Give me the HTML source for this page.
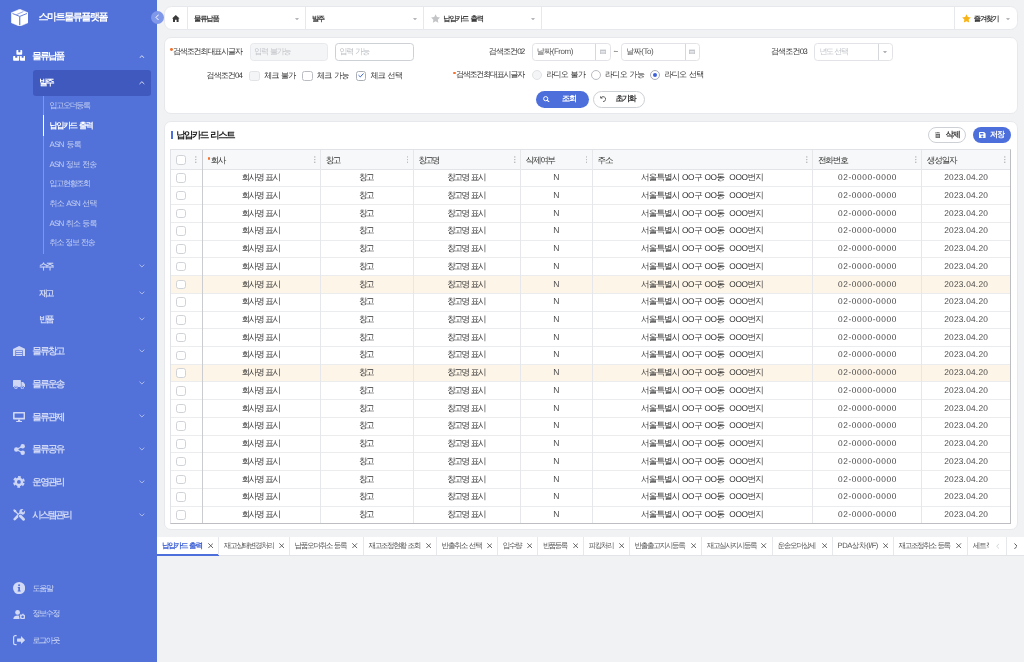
<!DOCTYPE html>
<html lang="ko"><head><meta charset="utf-8"><title>납입카드 출력</title>
<style>
*{box-sizing:border-box;margin:0;padding:0}
html,body{width:1024px;height:662px;overflow:hidden;background:#f1f2f4;font-family:"Liberation Sans",sans-serif;text-rendering:geometricPrecision}
body{position:relative}
#root{position:absolute;left:0;top:0;width:1024px;height:662px;will-change:transform}
.b{position:absolute;display:block}
.t{position:absolute;line-height:12px;white-space:nowrap}
</style></head><body>
<div id="root">
<div class="b " style="left:0px;top:0px;width:157px;height:662px;background:#5272d9"></div>
<svg class="b" style="left:10.8px;top:8.8px;width:17.5px;height:17.5px;" viewBox="0 0 17.5 17.5"><path d="M8.75 .2L17.2 3.800V13.700L8.750 17.300L.3 13.700V3.800z" fill="#fff" stroke="#fff" stroke-width=".5" stroke-linejoin="round"/><path d="M1.500 4.500L8.750 7.400L16 4.500" stroke="#5272d9" stroke-width=".9" fill="none"/><path d="M8.750 7.400V16.200" stroke="#5272d9" stroke-width="1.100" fill="none"/><path d="M5.300 5.700L12.400 2.600" stroke="#5272d9" stroke-width=".8" fill="none" opacity=".75"/></svg>
<div class="t" style="top:11.9px;font-size:10px;color:#fff;letter-spacing:-1.429px;font-weight:bold;word-spacing:1.3px;left:38.5px;">스마트물류플랫폼</div>
<svg class="b" style="left:12.8px;top:50.2px;width:12.4px;height:11px;" viewBox="0 0 12.4 11"><rect x="3.4" y=".1" width="5.8" height="4.7" rx=".7" fill="#fff"/><rect x=".1" y="5.9" width="6.1" height="4.9" rx=".7" fill="#fff"/><rect x="7" y="5.9" width="5.3" height="4.9" rx=".7" fill="#fff"/><path d="M5.300 0h2.100v2.300H5.300zM2.200 5.800h2.100v2H2.200zM8.700 5.800h1.900v2H8.700z" fill="#5272d9"/></svg>
<div class="t" style="top:50.6px;font-size:9.5px;color:#fff;letter-spacing:-1.683px;font-weight:bold;word-spacing:1.24px;left:32.32px;">물류납품</div>
<svg class="b" style="left:138.9px;top:54.65px;width:5.8px;height:3.7px;" viewBox="0 0 5.800 3.700"><path d="M.5 3L2.900.7 5.300 3" fill="none" stroke="#dfe5f9" stroke-width="0.95"/></svg>
<div class="b " style="left:33px;top:70px;width:118px;height:25.5px;background:#3f59bf;border-radius:3px"></div>
<div class="t" style="top:76.4px;font-size:8.6px;color:#fff;letter-spacing:-1.928px;font-weight:bold;word-spacing:1.12px;left:39.37px;">발주</div>
<svg class="b" style="left:138.9px;top:80.95px;width:5.8px;height:3.7px;" viewBox="0 0 5.800 3.700"><path d="M.5 3L2.900.7 5.300 3" fill="none" stroke="#dfe5f9" stroke-width="0.95"/></svg>
<div class="b " style="left:43px;top:95.5px;width:1px;height:158px;background:#8097e4"></div>
<div class="t" style="top:99.9px;font-size:8px;color:#c5cff2;letter-spacing:-1.32px;word-spacing:1.04px;left:49.6px;">입고오더등록</div>
<div class="b " style="left:42.7px;top:115px;width:1.6px;height:20.8px;background:#fff"></div>
<div class="t" style="top:119.5px;font-size:8px;color:#fff;letter-spacing:-1.196px;font-weight:bold;word-spacing:1.04px;left:49.6px;">납입카드 출력</div>
<div class="t" style="top:139.1px;font-size:8px;color:#c5cff2;letter-spacing:-0.722px;word-spacing:1.04px;left:49.6px;">ASN 등록</div>
<div class="t" style="top:158.7px;font-size:8px;color:#c5cff2;letter-spacing:-0.911px;word-spacing:1.04px;left:49.6px;">ASN 정보 전송</div>
<div class="t" style="top:178.3px;font-size:8px;color:#c5cff2;letter-spacing:-1.32px;word-spacing:1.04px;left:49.6px;">입고현황조회</div>
<div class="t" style="top:197.9px;font-size:8px;color:#c5cff2;letter-spacing:-0.886px;word-spacing:1.04px;left:49.6px;">취소 ASN 선택</div>
<div class="t" style="top:217.5px;font-size:8px;color:#c5cff2;letter-spacing:-0.886px;word-spacing:1.04px;left:49.6px;">ASN 취소 등록</div>
<div class="t" style="top:237.1px;font-size:8px;color:#c5cff2;letter-spacing:-1.19px;word-spacing:1.04px;left:49.6px;">취소 정보 전송</div>
<div class="t" style="top:260.2px;font-size:8.6px;color:#cfd7f5;letter-spacing:-1.928px;font-weight:bold;word-spacing:1.12px;left:39.17px;">수주</div>
<svg class="b" style="left:138.9px;top:264.35px;width:5.8px;height:3.7px;" viewBox="0 0 5.800 3.700"><path d="M.5.7L2.900 3 5.300.7" fill="none" stroke="#b4c1ef" stroke-width="0.95"/></svg>
<div class="t" style="top:286.5px;font-size:8.6px;color:#cfd7f5;letter-spacing:-1.928px;font-weight:bold;word-spacing:1.12px;left:39.17px;">재고</div>
<svg class="b" style="left:138.9px;top:290.65px;width:5.8px;height:3.7px;" viewBox="0 0 5.800 3.700"><path d="M.5.7L2.900 3 5.300.7" fill="none" stroke="#b4c1ef" stroke-width="0.95"/></svg>
<div class="t" style="top:312.8px;font-size:8.6px;color:#cfd7f5;letter-spacing:-1.928px;font-weight:bold;word-spacing:1.12px;left:39.17px;">반품</div>
<svg class="b" style="left:138.9px;top:316.95px;width:5.8px;height:3.7px;" viewBox="0 0 5.800 3.700"><path d="M.5.7L2.900 3 5.300.7" fill="none" stroke="#b4c1ef" stroke-width="0.95"/></svg>
<svg class="b" style="left:12.8px;top:346.2px;width:12.2px;height:10px;" viewBox="0 0 12.2 10"><path d="M6.100 0L0 2.900v7.100h2.200V4.200h7.800v5.800h2.200V2.900z" fill="#cfd7f5"/><path d="M3.100 4.900h6v1.100h-6zM3.100 6.900h6v1.100h-6zM3.100 8.900h6v1.100h-6z" fill="#cfd7f5"/><path d="M2.200 4.200h7.800v5.800H2.200z" fill="#cfd7f5" opacity=".25"/></svg>
<div class="t" style="top:345.9px;font-size:9.5px;color:#cfd7f5;letter-spacing:-1.683px;font-weight:bold;word-spacing:1.24px;left:32.32px;">물류창고</div>
<svg class="b" style="left:138.9px;top:348.55px;width:5.8px;height:3.7px;" viewBox="0 0 5.800 3.700"><path d="M.5.7L2.900 3 5.300.7" fill="none" stroke="#b4c1ef" stroke-width="0.95"/></svg>
<svg class="b" style="left:12.8px;top:379.5px;width:12px;height:9.5px;" viewBox="0 0 12 9.500"><path d="M.6 0h6.700c.3 0 .6.300.6.600V7H0V.6C0 .3.300 0 .6 0zM8.400 2h1.800l1.800 2.200V7H8.400z" fill="#cfd7f5"/><circle cx="2.900" cy="7.600" r="1.900" fill="#5272d9"/><circle cx="9.300" cy="7.600" r="1.900" fill="#5272d9"/><circle cx="2.900" cy="7.700" r="1.200" fill="none" stroke="#cfd7f5" stroke-width=".9"/><circle cx="9.300" cy="7.700" r="1.200" fill="none" stroke="#cfd7f5" stroke-width=".9"/></svg>
<div class="t" style="top:378.8px;font-size:9.5px;color:#cfd7f5;letter-spacing:-1.683px;font-weight:bold;word-spacing:1.24px;left:32.32px;">물류운송</div>
<svg class="b" style="left:138.9px;top:381.45px;width:5.8px;height:3.7px;" viewBox="0 0 5.800 3.700"><path d="M.5.7L2.900 3 5.300.7" fill="none" stroke="#b4c1ef" stroke-width="0.95"/></svg>
<svg class="b" style="left:12.8px;top:411.6px;width:12.2px;height:10.2px;" viewBox="0 0 12.2 10.2"><path d="M.8 0h10.600c.4 0 .8.400.8.800v6c0 .4-.4.800-.8.800H.8C.4 7.600 0 7.200 0 6.800v-6C0 .4.400 0 .8 0zM1.600 1.600v4.200h9V1.600z" fill="#cfd7f5" fill-rule="evenodd"/><path d="M5 7.600h2.200v1.400H5zM3.200 9h5.800v1.200H3.200z" fill="#cfd7f5"/></svg>
<div class="t" style="top:411.5px;font-size:9.5px;color:#cfd7f5;letter-spacing:-1.683px;font-weight:bold;word-spacing:1.24px;left:32.32px;">물류관제</div>
<svg class="b" style="left:138.9px;top:414.15px;width:5.8px;height:3.7px;" viewBox="0 0 5.800 3.700"><path d="M.5.7L2.900 3 5.300.7" fill="none" stroke="#b4c1ef" stroke-width="0.95"/></svg>
<svg class="b" style="left:13.8px;top:444px;width:11px;height:11px;" viewBox="0 0 11 11"><circle cx="2.300" cy="5.500" r="2.200" fill="#cfd7f5"/><circle cx="8.700" cy="2.300" r="2.200" fill="#cfd7f5"/><circle cx="8.700" cy="8.700" r="2.200" fill="#cfd7f5"/><path d="M2.300 5.500l6.400-3.200M2.300 5.500l6.400 3.200" stroke="#cfd7f5" stroke-width="1.200"/></svg>
<div class="t" style="top:444.3px;font-size:9.5px;color:#cfd7f5;letter-spacing:-1.683px;font-weight:bold;word-spacing:1.24px;left:32.32px;">물류공유</div>
<svg class="b" style="left:138.9px;top:446.95px;width:5.8px;height:3.7px;" viewBox="0 0 5.800 3.700"><path d="M.5.7L2.900 3 5.300.7" fill="none" stroke="#b4c1ef" stroke-width="0.95"/></svg>
<svg class="b" style="left:13px;top:476.4px;width:11.8px;height:11.8px;" viewBox="0 0 11.8 11.8"><circle cx="5.9" cy="5.9" r="4.300" fill="#cfd7f5"/><circle cx="5.9" cy="5.9" r="4.900" fill="none" stroke="#cfd7f5" stroke-width="2" stroke-dasharray="2.700 2.431" stroke-dashoffset="-1.216"/><circle cx="5.9" cy="5.9" r="1.900" fill="#5272d9"/></svg>
<div class="t" style="top:477.1px;font-size:9.5px;color:#cfd7f5;letter-spacing:-1.683px;font-weight:bold;word-spacing:1.24px;left:32.32px;">운영관리</div>
<svg class="b" style="left:138.9px;top:479.75px;width:5.8px;height:3.7px;" viewBox="0 0 5.800 3.700"><path d="M.5.7L2.900 3 5.300.7" fill="none" stroke="#b4c1ef" stroke-width="0.95"/></svg>
<svg class="b" style="left:12.8px;top:509.2px;width:12.2px;height:11.8px;" viewBox="0 0 12.2 11.8"><path d="M1.700 10.200L7.800 4" stroke="#cfd7f5" stroke-width="2.500" stroke-linecap="round"/><circle cx="9.200" cy="2.900" r="2.800" fill="#cfd7f5"/><path d="M9.400 2.700L12.800 -.7" stroke="#5272d9" stroke-width="2.100"/><path d="M1.600 1.600L6 6" stroke="#cfd7f5" stroke-width="1.300"/><path d="M.2 1.100L1.100 .2l2 1 .4 1.300-1 1-1.300-.4z" fill="#cfd7f5"/><path d="M7.300 7.100L10.500 10.300" stroke="#5272d9" stroke-width="4.200" stroke-linecap="round"/><path d="M7.300 7.100L10.500 10.300" stroke="#cfd7f5" stroke-width="2.900" stroke-linecap="round"/></svg>
<div class="t" style="top:510px;font-size:9.5px;color:#cfd7f5;letter-spacing:-1.762px;font-weight:bold;word-spacing:1.24px;left:32.32px;">시스템관리</div>
<svg class="b" style="left:138.9px;top:512.65px;width:5.8px;height:3.7px;" viewBox="0 0 5.800 3.700"><path d="M.5.7L2.900 3 5.300.7" fill="none" stroke="#b4c1ef" stroke-width="0.95"/></svg>
<svg class="b" style="left:12.8px;top:582px;width:12.2px;height:12.2px;" viewBox="0 0 12 12"><circle cx="6" cy="6" r="6" fill="#d2daf5"/><path d="M5.200 5h1.700v3.600H5.200zM4.600 8.400h2.900v.9H4.600zM4.700 4.900h1.500v.9H4.700z" fill="#5272d9"/><circle cx="6" cy="3.200" r="1" fill="#5272d9"/></svg>
<div class="t" style="top:582.7px;font-size:8px;color:#d2daf5;letter-spacing:-1.2px;word-spacing:1.04px;left:32.4px;">도움말</div>
<svg class="b" style="left:12.8px;top:609.7px;width:12.4px;height:9.8px;" viewBox="0 0 12.4 9.8"><circle cx="4.600" cy="2.400" r="2.400" fill="#d2daf5"/><path d="M.2 9.700c0-3 1.900-4.300 4.400-4.300 2.500 0 4.400 1.300 4.400 4.300z" fill="#d2daf5"/><circle cx="9.600" cy="6.700" r="3.500" fill="#5272d9"/><circle cx="9.600" cy="6.700" r="1.900" fill="none" stroke="#d2daf5" stroke-width="1.300"/><circle cx="9.600" cy="6.700" r="2.500" fill="none" stroke="#d2daf5" stroke-width="1.100" stroke-dasharray="1.300 1.318" stroke-dashoffset="-.66"/></svg>
<div class="t" style="top:608.4px;font-size:8px;color:#d2daf5;letter-spacing:-1.267px;word-spacing:1.04px;left:32.4px;">정보수정</div>
<svg class="b" style="left:12.8px;top:635.4px;width:12.2px;height:10.2px;" viewBox="0 0 12.2 10.2"><path d="M3.600 0v1.200H2.300c-.6 0-1.100.5-1.100 1.100v5.600c0 .6.500 1.100 1.100 1.100h1.300v1.200H2.300C1 10.200 0 9.200 0 7.900V2.300C0 1 1 0 2.300 0z" fill="#d2daf5"/><path d="M8 1.100l4.200 4L8 9.100V6.700H4.600c-.3 0-.6-.3-.6-.6V4.100c0-.3.300-.6.600-.6H8z" fill="#d2daf5"/></svg>
<div class="t" style="top:634.8px;font-size:8px;color:#d2daf5;letter-spacing:-1.267px;word-spacing:1.04px;left:32.4px;">로그아웃</div>
<div class="b " style="left:150.5px;top:10.5px;width:13px;height:13px;background:#8098ea;border-radius:50%"></div>
<svg class="b" style="left:154.6px;top:13.6px;width:4.4px;height:6.8px;" viewBox="0 0 4.400 6.800"><path d="M3.700.6L1 3.400l2.700 2.800" fill="none" stroke="#fff" stroke-width="1"/></svg>
<div class="b " style="left:164px;top:6px;width:854px;height:23.5px;background:#fff;border:1px solid #e7e8eb;border-radius:7.5px"></div>
<svg class="b" style="left:172.2px;top:14.9px;width:7.6px;height:7px;" viewBox="0 0 7.600 7"><path d="M3.800 0L0 3.400h1V7h2V4.700h1.600V7h2V3.400h1z" fill="#3a3a3a"/></svg>
<div class="b " style="left:187px;top:7px;width:1px;height:21.5px;background:#e7e8eb"></div>
<div class="b " style="left:305px;top:7px;width:1px;height:21.5px;background:#e7e8eb"></div>
<div class="b " style="left:423px;top:7px;width:1px;height:21.5px;background:#e7e8eb"></div>
<div class="b " style="left:541.4px;top:7px;width:1px;height:21.5px;background:#e7e8eb"></div>
<div class="b " style="left:954px;top:7px;width:1px;height:21.5px;background:#e7e8eb"></div>
<div class="t" style="top:12.5px;font-size:7.3px;color:#3d3d3d;letter-spacing:-1.152px;font-weight:bold;word-spacing:0.95px;left:194.03px;">물류납품</div>
<div class="t" style="top:12.5px;font-size:7.3px;color:#3d3d3d;letter-spacing:-1.564px;font-weight:bold;word-spacing:0.95px;left:311.94px;">발주</div>
<div class="t" style="top:12.5px;font-size:7.3px;color:#3d3d3d;letter-spacing:-0.972px;font-weight:bold;word-spacing:0.95px;left:443.13px;">납입카드 출력</div>
<div class="t" style="top:12.5px;font-size:7.3px;color:#3d3d3d;letter-spacing:-1.186px;font-weight:bold;word-spacing:0.95px;left:973.84px;">즐겨찾기</div>
<svg class="b" style="left:294.5px;top:17.6px;width:4px;height:2.6px;" viewBox="0 0 4 2.600"><path d="M0 0h4L2 2.600z" fill="#b4b7bc"/></svg>
<svg class="b" style="left:412.5px;top:17.6px;width:4px;height:2.6px;" viewBox="0 0 4 2.600"><path d="M0 0h4L2 2.600z" fill="#b4b7bc"/></svg>
<svg class="b" style="left:531px;top:17.6px;width:4px;height:2.6px;" viewBox="0 0 4 2.600"><path d="M0 0h4L2 2.600z" fill="#b4b7bc"/></svg>
<svg class="b" style="left:1006px;top:17.6px;width:4px;height:2.6px;" viewBox="0 0 4 2.600"><path d="M0 0h4L2 2.600z" fill="#b4b7bc"/></svg>
<svg class="b" style="left:431.2px;top:13.9px;width:9.2px;height:9px;" viewBox="0 0 10 9.800"><path d="M5 .2l1.500 3.100 3.400.5-2.500 2.400.6 3.400L5 8l-3 1.600.6-3.400L.1 3.800l3.400-.5z" fill="#c3c4c7"/></svg>
<svg class="b" style="left:961.8px;top:14.2px;width:9px;height:8.8px;" viewBox="0 0 10 9.800"><path d="M5 .2l1.500 3.100 3.400.5-2.500 2.400.6 3.400L5 8l-3 1.600.6-3.400L.1 3.800l3.400-.5z" fill="#f8b417"/></svg>
<div class="b " style="left:164px;top:37px;width:854px;height:76.5px;background:#fff;border:1px solid #e7e8eb;border-radius:7px"></div>
<div class="t" style="top:45.8px;font-size:8px;color:#333;letter-spacing:-1.121px;word-spacing:1.04px;right:782.22px;text-align:right;"><i style="display:inline-block;width:2.8px;height:2.8px;border-radius:50%;background:#f4702a;vertical-align:2.9px;margin-right:.4px"></i>검색조건최대표시글자</div>
<div class="b " style="left:249.5px;top:43px;width:78.5px;height:17.5px;background:#f4f5f6;border:1px solid #e8e9ec;border-radius:3.5px"></div>
<div class="t" style="top:45.8px;font-size:8px;color:#c2c5ca;letter-spacing:-1.215px;word-spacing:1.04px;left:254.3px;">입력 불가능</div>
<div class="b " style="left:335px;top:43px;width:78.5px;height:17.5px;background:#fff;border:1px solid #cdd0d4;border-radius:3.5px"></div>
<div class="t" style="top:45.8px;font-size:8px;color:#bbbec3;letter-spacing:-1.144px;word-spacing:1.04px;left:339.5px;">입력 가능</div>
<div class="t" style="top:45.8px;font-size:8px;color:#333;letter-spacing:-0.901px;word-spacing:1.04px;right:499.7px;text-align:right;">검색조건02</div>
<div class="b " style="left:531.5px;top:43px;width:79px;height:17.5px;background:#fff;border:1px solid #e1e3e6;border-radius:3.5px"></div>
<div class="b " style="left:595px;top:44px;width:1px;height:15.5px;background:#d6d8dc"></div>
<div class="t" style="top:46px;font-size:8px;color:#555;letter-spacing:-0.471px;word-spacing:1.04px;left:536.7px;">날짜(From)</div>
<svg class="b" style="left:599.8px;top:48.6px;width:6px;height:5.8px;" viewBox="0 0 6 5.800"><path d="M0 .6h6v5.200H0z" fill="#c3c6cb"/><path d="M.8 2.500h4.400M.8 3.900h4.400" stroke="#fff" stroke-width=".6"/></svg>
<div class="t" style="top:45.8px;font-size:8px;color:#333;letter-spacing:0px;left:613.5px;">~</div>
<div class="b " style="left:621px;top:43px;width:79px;height:17.5px;background:#fff;border:1px solid #e1e3e6;border-radius:3.5px"></div>
<div class="b " style="left:684.5px;top:44px;width:1px;height:15.5px;background:#d6d8dc"></div>
<div class="t" style="top:46px;font-size:8px;color:#555;letter-spacing:-0.436px;word-spacing:1.04px;left:626.2px;">날짜(To)</div>
<svg class="b" style="left:689.3px;top:48.6px;width:6px;height:5.8px;" viewBox="0 0 6 5.800"><path d="M0 .6h6v5.200H0z" fill="#c3c6cb"/><path d="M.8 2.500h4.400M.8 3.900h4.400" stroke="#fff" stroke-width=".6"/></svg>
<div class="t" style="top:45.8px;font-size:8px;color:#333;letter-spacing:-0.801px;word-spacing:1.04px;right:217px;text-align:right;">검색조건03</div>
<div class="b " style="left:814px;top:43px;width:79px;height:17.5px;background:#fff;border:1px solid #e1e3e6;border-radius:3.5px"></div>
<div class="b " style="left:877.5px;top:44px;width:1px;height:15.5px;background:#d6d8dc"></div>
<div class="t" style="top:45.8px;font-size:8px;color:#c2c5ca;letter-spacing:-1.494px;word-spacing:1.04px;left:819.6px;">년도 선택</div>
<svg class="b" style="left:883.3px;top:50.8px;width:4px;height:2.6px;" viewBox="0 0 4 2.600"><path d="M0 0h4L2 2.600z" fill="#aeb1b6"/></svg>
<div class="t" style="top:69.6px;font-size:8px;color:#333;letter-spacing:-0.921px;word-spacing:1.04px;right:782.02px;text-align:right;">검색조건04</div>
<div class="b " style="left:249.4px;top:70.6px;width:10.2px;height:10.2px;background:#f4f5f6;border:1px solid #e1e3e6;border-radius:2.5px"></div>
<div class="t" style="top:69.6px;font-size:8px;color:#333;letter-spacing:-0.794px;word-spacing:1.04px;left:264.2px;">체크 불가</div>
<div class="b " style="left:302.4px;top:70.6px;width:10.2px;height:10.2px;background:#fff;border:1px solid #b9bcc2;border-radius:2.5px"></div>
<div class="t" style="top:69.6px;font-size:8px;color:#333;letter-spacing:-0.669px;word-spacing:1.04px;left:317px;">체크 가능</div>
<div class="b " style="left:355.7px;top:70.6px;width:10.2px;height:10.2px;background:#fff;border:1px solid #a9adb4;border-radius:2.5px"></div>
<svg class="b" style="left:357.9px;top:73.3px;width:6px;height:4.6px;" viewBox="0 0 6 4.600"><path d="M.5 2.200l1.800 1.700L5.500.5" fill="none" stroke="#3f63d6" stroke-width="1"/></svg>
<div class="t" style="top:69.6px;font-size:8px;color:#333;letter-spacing:-0.694px;word-spacing:1.04px;left:370.4px;">체크 선택</div>
<div class="t" style="top:69.2px;font-size:8px;color:#333;letter-spacing:-1.188px;word-spacing:1.04px;right:499.99px;text-align:right;"><i style="display:inline-block;width:2.8px;height:2.8px;border-radius:50%;background:#f4702a;vertical-align:2.9px;margin-right:.4px"></i>검색조건최대표시글자</div>
<div class="b " style="left:531.5px;top:70.1px;width:10.3px;height:10.3px;background:#f4f5f6;border:1px solid #e1e3e6;border-radius:50%"></div>
<div class="t" style="top:69.2px;font-size:8px;color:#333;letter-spacing:-0.715px;word-spacing:1.04px;left:546.2px;">라디오 불가</div>
<div class="b " style="left:591px;top:70.1px;width:10.3px;height:10.3px;background:#fff;border:1px solid #b9bcc2;border-radius:50%"></div>
<div class="t" style="top:69.2px;font-size:8px;color:#333;letter-spacing:-0.675px;word-spacing:1.04px;left:605px;">라디오 가능</div>
<div class="b " style="left:650px;top:70.1px;width:10.3px;height:10.3px;background:#fff;border:1px solid #a9adb4;border-radius:50%"></div>
<div class="b " style="left:653.15px;top:73.25px;width:4px;height:4px;background:#3f63d6;border-radius:50%"></div>
<div class="t" style="top:69.2px;font-size:8px;color:#333;letter-spacing:-0.675px;word-spacing:1.04px;left:664.4px;">라디오 선택</div>
<div class="b " style="left:535.7px;top:90.6px;width:53.3px;height:17.3px;background:#4d6fdc;border-radius:9px"></div>
<svg class="b" style="left:543.4px;top:95.8px;width:6.6px;height:6.6px;" viewBox="0 0 6.600 6.600"><circle cx="2.700" cy="2.700" r="2.100" fill="none" stroke="#fff" stroke-width="1"/><path d="M4.200 4.200l2 2" stroke="#fff" stroke-width="1.100"/></svg>
<div class="t" style="top:93.3px;font-size:8px;color:#fff;letter-spacing:-1px;font-weight:bold;word-spacing:1.04px;left:562.1px;">조회</div>
<div class="b " style="left:593px;top:90.6px;width:51.5px;height:17.3px;background:#fff;border:1px solid #cdd0d4;border-radius:9px"></div>
<svg class="b" style="left:600px;top:96px;width:6px;height:6.2px;" viewBox="0 0 6 6.200"><path d="M1 1.800A2.500 2.500 0 113 5.600" fill="none" stroke="#444" stroke-width=".8"/><path d="M.4.300l.3 1.900 1.900-.2" fill="none" stroke="#444" stroke-width=".8"/></svg>
<div class="t" style="top:93.3px;font-size:8px;color:#333;letter-spacing:-1.35px;font-weight:bold;word-spacing:1.04px;left:615.4px;">초기화</div>
<div class="b " style="left:164px;top:121px;width:854px;height:409px;background:#fff;border:1px solid #e7e8eb;border-radius:7px"></div>
<div class="b " style="left:170.8px;top:130.6px;width:2px;height:8.6px;background:#4d6fdc"></div>
<div class="t" style="top:128.8px;font-size:9.4px;color:#222;letter-spacing:-1.431px;font-weight:bold;word-spacing:1.22px;left:176.13px;">납입카드 리스트</div>
<div class="b " style="left:928.3px;top:127.3px;width:37.7px;height:15.6px;background:#fff;border:1px solid #cdd0d4;border-radius:8px"></div>
<svg class="b" style="left:934.9px;top:131.6px;width:5.6px;height:6.6px;" viewBox="0 0 5.600 6.600"><path d="M0 .9h5.600M1.800.3h2" stroke="#555" stroke-width=".7" fill="none"/><path d="M.6 2h4.400v4.600H.6z" fill="#666"/><path d="M1.300 3.400h3M1.300 4.800h3" stroke="#fff" stroke-width=".5"/></svg>
<div class="t" style="top:129.3px;font-size:8px;color:#333;letter-spacing:-0.9px;font-weight:bold;word-spacing:1.04px;left:945.7px;">삭제</div>
<div class="b " style="left:972.9px;top:127.3px;width:37.7px;height:15.6px;background:#4d6fdc;border-radius:8px"></div>
<svg class="b" style="left:979.4px;top:131.7px;width:6.6px;height:6.6px;" viewBox="0 0 7 7"><path d="M.8 0h4.600L7 1.600v4.600c0 .4-.4.800-.8.800H.8C.4 7 0 6.600 0 6.200V.8C0 .4.400 0 .8 0zM1.200 1v1.700h3.500V1zM3.500 3.700a1.200 1.200 0 100 2.400 1.200 1.200 0 000-2.400z" fill="#fff" fill-rule="evenodd"/></svg>
<div class="t" style="top:129.3px;font-size:8px;color:#fff;letter-spacing:-1px;font-weight:bold;word-spacing:1.04px;left:989.9px;">저장</div>
<div class="b " style="left:170.5px;top:149.5px;width:840px;height:19.7px;background:#f7f8f9"></div>
<div class="b " style="left:170.5px;top:275.58px;width:840px;height:17.73px;background:#fdf5e7"></div>
<div class="b " style="left:170.5px;top:364.23px;width:840px;height:17.73px;background:#fdf5e7"></div>
<div class="b " style="left:170.5px;top:186.43px;width:840px;height:1px;background:#ebecee"></div>
<div class="b " style="left:170.5px;top:204.16px;width:840px;height:1px;background:#ebecee"></div>
<div class="b " style="left:170.5px;top:221.89px;width:840px;height:1px;background:#ebecee"></div>
<div class="b " style="left:170.5px;top:239.62px;width:840px;height:1px;background:#ebecee"></div>
<div class="b " style="left:170.5px;top:257.35px;width:840px;height:1px;background:#ebecee"></div>
<div class="b " style="left:170.5px;top:275.08px;width:840px;height:1px;background:#ebecee"></div>
<div class="b " style="left:170.5px;top:292.81px;width:840px;height:1px;background:#ebecee"></div>
<div class="b " style="left:170.5px;top:310.54px;width:840px;height:1px;background:#ebecee"></div>
<div class="b " style="left:170.5px;top:328.27px;width:840px;height:1px;background:#ebecee"></div>
<div class="b " style="left:170.5px;top:346px;width:840px;height:1px;background:#ebecee"></div>
<div class="b " style="left:170.5px;top:363.73px;width:840px;height:1px;background:#ebecee"></div>
<div class="b " style="left:170.5px;top:381.46px;width:840px;height:1px;background:#ebecee"></div>
<div class="b " style="left:170.5px;top:399.19px;width:840px;height:1px;background:#ebecee"></div>
<div class="b " style="left:170.5px;top:416.92px;width:840px;height:1px;background:#ebecee"></div>
<div class="b " style="left:170.5px;top:434.65px;width:840px;height:1px;background:#ebecee"></div>
<div class="b " style="left:170.5px;top:452.38px;width:840px;height:1px;background:#ebecee"></div>
<div class="b " style="left:170.5px;top:470.11px;width:840px;height:1px;background:#ebecee"></div>
<div class="b " style="left:170.5px;top:487.84px;width:840px;height:1px;background:#ebecee"></div>
<div class="b " style="left:170.5px;top:505.57px;width:840px;height:1px;background:#ebecee"></div>
<div class="b " style="left:170.5px;top:168.7px;width:840px;height:1px;background:#e3e4e7"></div>
<div class="b " style="left:201.8px;top:149.5px;width:1px;height:374px;background:#cacccf"></div>
<div class="b " style="left:320px;top:149.5px;width:1px;height:374px;background:#e6e7ea"></div>
<div class="b " style="left:412.7px;top:149.5px;width:1px;height:374px;background:#e6e7ea"></div>
<div class="b " style="left:520.1px;top:149.5px;width:1px;height:374px;background:#e6e7ea"></div>
<div class="b " style="left:591.7px;top:149.5px;width:1px;height:374px;background:#e6e7ea"></div>
<div class="b " style="left:812.2px;top:149.5px;width:1px;height:374px;background:#e6e7ea"></div>
<div class="b " style="left:921.1px;top:149.5px;width:1px;height:374px;background:#e6e7ea"></div>
<div class="b " style="left:170px;top:149px;width:841px;height:375px;border:1px solid #e1e2e5;border-bottom-color:#bcbec2;border-right-color:#bcbec2"></div>
<div class="t" style="top:153.8px;font-size:8.6px;color:#333;letter-spacing:-1.715px;word-spacing:1.12px;left:207.57px;"><i style="display:inline-block;width:2.8px;height:2.8px;border-radius:50%;background:#f4702a;vertical-align:2.9px;margin-right:.4px"></i>회사</div>
<div class="t" style="top:153.8px;font-size:8.6px;color:#333;letter-spacing:-1.628px;word-spacing:1.12px;left:325.77px;">창고</div>
<div class="t" style="top:153.8px;font-size:8.6px;color:#333;letter-spacing:-1.911px;word-spacing:1.12px;left:418.47px;">창고명</div>
<div class="t" style="top:153.8px;font-size:8.6px;color:#333;letter-spacing:-1.438px;word-spacing:1.12px;left:525.87px;">삭제여부</div>
<div class="t" style="top:153.8px;font-size:8.6px;color:#333;letter-spacing:-1.128px;word-spacing:1.12px;left:597.47px;">주소</div>
<div class="t" style="top:153.8px;font-size:8.6px;color:#333;letter-spacing:-1.205px;word-spacing:1.12px;left:817.97px;">전화번호</div>
<div class="t" style="top:153.8px;font-size:8.6px;color:#333;letter-spacing:-1.172px;word-spacing:1.12px;left:926.87px;">생성일자</div>
<svg class="b" style="left:195.2px;top:155.9px;width:1.6px;height:7.2px;" viewBox="0 0 1.600 7.200"><circle cx=".8" cy=".9" r=".7" fill="#a6a9ae"/><circle cx=".8" cy="3.600" r=".7" fill="#a6a9ae"/><circle cx=".8" cy="6.300" r=".7" fill="#a6a9ae"/></svg>
<svg class="b" style="left:314.2px;top:155.9px;width:1.6px;height:7.2px;" viewBox="0 0 1.600 7.200"><circle cx=".8" cy=".9" r=".7" fill="#a6a9ae"/><circle cx=".8" cy="3.600" r=".7" fill="#a6a9ae"/><circle cx=".8" cy="6.300" r=".7" fill="#a6a9ae"/></svg>
<svg class="b" style="left:406.9px;top:155.9px;width:1.6px;height:7.2px;" viewBox="0 0 1.600 7.200"><circle cx=".8" cy=".9" r=".7" fill="#a6a9ae"/><circle cx=".8" cy="3.600" r=".7" fill="#a6a9ae"/><circle cx=".8" cy="6.300" r=".7" fill="#a6a9ae"/></svg>
<svg class="b" style="left:514.3px;top:155.9px;width:1.6px;height:7.2px;" viewBox="0 0 1.600 7.200"><circle cx=".8" cy=".9" r=".7" fill="#a6a9ae"/><circle cx=".8" cy="3.600" r=".7" fill="#a6a9ae"/><circle cx=".8" cy="6.300" r=".7" fill="#a6a9ae"/></svg>
<svg class="b" style="left:585.9px;top:155.9px;width:1.6px;height:7.2px;" viewBox="0 0 1.600 7.200"><circle cx=".8" cy=".9" r=".7" fill="#a6a9ae"/><circle cx=".8" cy="3.600" r=".7" fill="#a6a9ae"/><circle cx=".8" cy="6.300" r=".7" fill="#a6a9ae"/></svg>
<svg class="b" style="left:806.4px;top:155.9px;width:1.6px;height:7.2px;" viewBox="0 0 1.600 7.200"><circle cx=".8" cy=".9" r=".7" fill="#a6a9ae"/><circle cx=".8" cy="3.600" r=".7" fill="#a6a9ae"/><circle cx=".8" cy="6.300" r=".7" fill="#a6a9ae"/></svg>
<svg class="b" style="left:915.3px;top:155.9px;width:1.6px;height:7.2px;" viewBox="0 0 1.600 7.200"><circle cx=".8" cy=".9" r=".7" fill="#a6a9ae"/><circle cx=".8" cy="3.600" r=".7" fill="#a6a9ae"/><circle cx=".8" cy="6.300" r=".7" fill="#a6a9ae"/></svg>
<svg class="b" style="left:1004.2px;top:155.9px;width:1.6px;height:7.2px;" viewBox="0 0 1.600 7.200"><circle cx=".8" cy=".9" r=".7" fill="#a6a9ae"/><circle cx=".8" cy="3.600" r=".7" fill="#a6a9ae"/><circle cx=".8" cy="6.300" r=".7" fill="#a6a9ae"/></svg>
<div class="b " style="left:176.3px;top:155px;width:9.5px;height:9.5px;background:#fff;border:1px solid #cfd2d6;border-radius:2.7px"></div>
<div class="b " style="left:176.3px;top:173.26px;width:9.5px;height:9.5px;background:#fff;border:1px solid #cfd2d6;border-radius:2.7px"></div>
<div class="t" style="top:171.16px;font-size:8.6px;color:#333;letter-spacing:-1.403px;word-spacing:1.12px;left:201.6px;width:118.19999999999999px;text-align:center;">회사명 표시</div>
<div class="t" style="top:171.16px;font-size:8.6px;color:#333;letter-spacing:-1.628px;word-spacing:1.12px;left:319.69px;width:92.69999999999999px;text-align:center;">창고</div>
<div class="t" style="top:171.16px;font-size:8.6px;color:#333;letter-spacing:-1.403px;word-spacing:1.12px;left:412.5px;width:107.40000000000003px;text-align:center;">창고명 표시</div>
<div class="t" style="top:171.16px;font-size:8.6px;color:#505050;letter-spacing:0px;left:520.6px;width:71.60000000000002px;text-align:center;">N</div>
<div class="t" style="top:171.16px;font-size:8.6px;color:#333;letter-spacing:-0.926px;word-spacing:1.12px;left:591.74px;width:220.5px;text-align:center;">서울특별시 <span style="font-size:8.3px;letter-spacing:-.4px">OO</span>구 <span style="font-size:8.3px;letter-spacing:-.4px">OO</span>동&nbsp; <span style="font-size:8.3px;letter-spacing:-.4px">OOO</span>번지</div>
<div class="t" style="top:171.16px;font-size:8.3px;color:#444;letter-spacing:0.614px;left:813.01px;width:108.89999999999998px;text-align:center;">02-0000-0000</div>
<div class="t" style="top:171.16px;font-size:8.3px;color:#444;letter-spacing:0.233px;left:921.72px;width:88.89999999999998px;text-align:center;">2023.04.20</div>
<div class="b " style="left:176.3px;top:190.99px;width:9.5px;height:9.5px;background:#fff;border:1px solid #cfd2d6;border-radius:2.7px"></div>
<div class="t" style="top:188.89px;font-size:8.6px;color:#333;letter-spacing:-1.403px;word-spacing:1.12px;left:201.6px;width:118.19999999999999px;text-align:center;">회사명 표시</div>
<div class="t" style="top:188.89px;font-size:8.6px;color:#333;letter-spacing:-1.628px;word-spacing:1.12px;left:319.69px;width:92.69999999999999px;text-align:center;">창고</div>
<div class="t" style="top:188.89px;font-size:8.6px;color:#333;letter-spacing:-1.403px;word-spacing:1.12px;left:412.5px;width:107.40000000000003px;text-align:center;">창고명 표시</div>
<div class="t" style="top:188.89px;font-size:8.6px;color:#505050;letter-spacing:0px;left:520.6px;width:71.60000000000002px;text-align:center;">N</div>
<div class="t" style="top:188.89px;font-size:8.6px;color:#333;letter-spacing:-0.926px;word-spacing:1.12px;left:591.74px;width:220.5px;text-align:center;">서울특별시 <span style="font-size:8.3px;letter-spacing:-.4px">OO</span>구 <span style="font-size:8.3px;letter-spacing:-.4px">OO</span>동&nbsp; <span style="font-size:8.3px;letter-spacing:-.4px">OOO</span>번지</div>
<div class="t" style="top:188.89px;font-size:8.3px;color:#444;letter-spacing:0.614px;left:813.01px;width:108.89999999999998px;text-align:center;">02-0000-0000</div>
<div class="t" style="top:188.89px;font-size:8.3px;color:#444;letter-spacing:0.233px;left:921.72px;width:88.89999999999998px;text-align:center;">2023.04.20</div>
<div class="b " style="left:176.3px;top:208.72px;width:9.5px;height:9.5px;background:#fff;border:1px solid #cfd2d6;border-radius:2.7px"></div>
<div class="t" style="top:206.62px;font-size:8.6px;color:#333;letter-spacing:-1.403px;word-spacing:1.12px;left:201.6px;width:118.19999999999999px;text-align:center;">회사명 표시</div>
<div class="t" style="top:206.62px;font-size:8.6px;color:#333;letter-spacing:-1.628px;word-spacing:1.12px;left:319.69px;width:92.69999999999999px;text-align:center;">창고</div>
<div class="t" style="top:206.62px;font-size:8.6px;color:#333;letter-spacing:-1.403px;word-spacing:1.12px;left:412.5px;width:107.40000000000003px;text-align:center;">창고명 표시</div>
<div class="t" style="top:206.62px;font-size:8.6px;color:#505050;letter-spacing:0px;left:520.6px;width:71.60000000000002px;text-align:center;">N</div>
<div class="t" style="top:206.62px;font-size:8.6px;color:#333;letter-spacing:-0.926px;word-spacing:1.12px;left:591.74px;width:220.5px;text-align:center;">서울특별시 <span style="font-size:8.3px;letter-spacing:-.4px">OO</span>구 <span style="font-size:8.3px;letter-spacing:-.4px">OO</span>동&nbsp; <span style="font-size:8.3px;letter-spacing:-.4px">OOO</span>번지</div>
<div class="t" style="top:206.62px;font-size:8.3px;color:#444;letter-spacing:0.614px;left:813.01px;width:108.89999999999998px;text-align:center;">02-0000-0000</div>
<div class="t" style="top:206.62px;font-size:8.3px;color:#444;letter-spacing:0.233px;left:921.72px;width:88.89999999999998px;text-align:center;">2023.04.20</div>
<div class="b " style="left:176.3px;top:226.45px;width:9.5px;height:9.5px;background:#fff;border:1px solid #cfd2d6;border-radius:2.7px"></div>
<div class="t" style="top:224.35px;font-size:8.6px;color:#333;letter-spacing:-1.403px;word-spacing:1.12px;left:201.6px;width:118.19999999999999px;text-align:center;">회사명 표시</div>
<div class="t" style="top:224.35px;font-size:8.6px;color:#333;letter-spacing:-1.628px;word-spacing:1.12px;left:319.69px;width:92.69999999999999px;text-align:center;">창고</div>
<div class="t" style="top:224.35px;font-size:8.6px;color:#333;letter-spacing:-1.403px;word-spacing:1.12px;left:412.5px;width:107.40000000000003px;text-align:center;">창고명 표시</div>
<div class="t" style="top:224.35px;font-size:8.6px;color:#505050;letter-spacing:0px;left:520.6px;width:71.60000000000002px;text-align:center;">N</div>
<div class="t" style="top:224.35px;font-size:8.6px;color:#333;letter-spacing:-0.926px;word-spacing:1.12px;left:591.74px;width:220.5px;text-align:center;">서울특별시 <span style="font-size:8.3px;letter-spacing:-.4px">OO</span>구 <span style="font-size:8.3px;letter-spacing:-.4px">OO</span>동&nbsp; <span style="font-size:8.3px;letter-spacing:-.4px">OOO</span>번지</div>
<div class="t" style="top:224.35px;font-size:8.3px;color:#444;letter-spacing:0.614px;left:813.01px;width:108.89999999999998px;text-align:center;">02-0000-0000</div>
<div class="t" style="top:224.35px;font-size:8.3px;color:#444;letter-spacing:0.233px;left:921.72px;width:88.89999999999998px;text-align:center;">2023.04.20</div>
<div class="b " style="left:176.3px;top:244.19px;width:9.5px;height:9.5px;background:#fff;border:1px solid #cfd2d6;border-radius:2.7px"></div>
<div class="t" style="top:242.09px;font-size:8.6px;color:#333;letter-spacing:-1.403px;word-spacing:1.12px;left:201.6px;width:118.19999999999999px;text-align:center;">회사명 표시</div>
<div class="t" style="top:242.09px;font-size:8.6px;color:#333;letter-spacing:-1.628px;word-spacing:1.12px;left:319.69px;width:92.69999999999999px;text-align:center;">창고</div>
<div class="t" style="top:242.09px;font-size:8.6px;color:#333;letter-spacing:-1.403px;word-spacing:1.12px;left:412.5px;width:107.40000000000003px;text-align:center;">창고명 표시</div>
<div class="t" style="top:242.09px;font-size:8.6px;color:#505050;letter-spacing:0px;left:520.6px;width:71.60000000000002px;text-align:center;">N</div>
<div class="t" style="top:242.09px;font-size:8.6px;color:#333;letter-spacing:-0.926px;word-spacing:1.12px;left:591.74px;width:220.5px;text-align:center;">서울특별시 <span style="font-size:8.3px;letter-spacing:-.4px">OO</span>구 <span style="font-size:8.3px;letter-spacing:-.4px">OO</span>동&nbsp; <span style="font-size:8.3px;letter-spacing:-.4px">OOO</span>번지</div>
<div class="t" style="top:242.09px;font-size:8.3px;color:#444;letter-spacing:0.614px;left:813.01px;width:108.89999999999998px;text-align:center;">02-0000-0000</div>
<div class="t" style="top:242.09px;font-size:8.3px;color:#444;letter-spacing:0.233px;left:921.72px;width:88.89999999999998px;text-align:center;">2023.04.20</div>
<div class="b " style="left:176.3px;top:261.92px;width:9.5px;height:9.5px;background:#fff;border:1px solid #cfd2d6;border-radius:2.7px"></div>
<div class="t" style="top:259.82px;font-size:8.6px;color:#333;letter-spacing:-1.403px;word-spacing:1.12px;left:201.6px;width:118.19999999999999px;text-align:center;">회사명 표시</div>
<div class="t" style="top:259.82px;font-size:8.6px;color:#333;letter-spacing:-1.628px;word-spacing:1.12px;left:319.69px;width:92.69999999999999px;text-align:center;">창고</div>
<div class="t" style="top:259.82px;font-size:8.6px;color:#333;letter-spacing:-1.403px;word-spacing:1.12px;left:412.5px;width:107.40000000000003px;text-align:center;">창고명 표시</div>
<div class="t" style="top:259.82px;font-size:8.6px;color:#505050;letter-spacing:0px;left:520.6px;width:71.60000000000002px;text-align:center;">N</div>
<div class="t" style="top:259.82px;font-size:8.6px;color:#333;letter-spacing:-0.926px;word-spacing:1.12px;left:591.74px;width:220.5px;text-align:center;">서울특별시 <span style="font-size:8.3px;letter-spacing:-.4px">OO</span>구 <span style="font-size:8.3px;letter-spacing:-.4px">OO</span>동&nbsp; <span style="font-size:8.3px;letter-spacing:-.4px">OOO</span>번지</div>
<div class="t" style="top:259.82px;font-size:8.3px;color:#444;letter-spacing:0.614px;left:813.01px;width:108.89999999999998px;text-align:center;">02-0000-0000</div>
<div class="t" style="top:259.82px;font-size:8.3px;color:#444;letter-spacing:0.233px;left:921.72px;width:88.89999999999998px;text-align:center;">2023.04.20</div>
<div class="b " style="left:176.3px;top:279.64px;width:9.5px;height:9.5px;background:#fff;border:1px solid #cfd2d6;border-radius:2.7px"></div>
<div class="t" style="top:277.55px;font-size:8.6px;color:#333;letter-spacing:-1.403px;word-spacing:1.12px;left:201.6px;width:118.19999999999999px;text-align:center;">회사명 표시</div>
<div class="t" style="top:277.55px;font-size:8.6px;color:#333;letter-spacing:-1.628px;word-spacing:1.12px;left:319.69px;width:92.69999999999999px;text-align:center;">창고</div>
<div class="t" style="top:277.55px;font-size:8.6px;color:#333;letter-spacing:-1.403px;word-spacing:1.12px;left:412.5px;width:107.40000000000003px;text-align:center;">창고명 표시</div>
<div class="t" style="top:277.55px;font-size:8.6px;color:#505050;letter-spacing:0px;left:520.6px;width:71.60000000000002px;text-align:center;">N</div>
<div class="t" style="top:277.55px;font-size:8.6px;color:#333;letter-spacing:-0.926px;word-spacing:1.12px;left:591.74px;width:220.5px;text-align:center;">서울특별시 <span style="font-size:8.3px;letter-spacing:-.4px">OO</span>구 <span style="font-size:8.3px;letter-spacing:-.4px">OO</span>동&nbsp; <span style="font-size:8.3px;letter-spacing:-.4px">OOO</span>번지</div>
<div class="t" style="top:277.55px;font-size:8.3px;color:#444;letter-spacing:0.614px;left:813.01px;width:108.89999999999998px;text-align:center;">02-0000-0000</div>
<div class="t" style="top:277.55px;font-size:8.3px;color:#444;letter-spacing:0.233px;left:921.72px;width:88.89999999999998px;text-align:center;">2023.04.20</div>
<div class="b " style="left:176.3px;top:297.38px;width:9.5px;height:9.5px;background:#fff;border:1px solid #cfd2d6;border-radius:2.7px"></div>
<div class="t" style="top:295.28px;font-size:8.6px;color:#333;letter-spacing:-1.403px;word-spacing:1.12px;left:201.6px;width:118.19999999999999px;text-align:center;">회사명 표시</div>
<div class="t" style="top:295.28px;font-size:8.6px;color:#333;letter-spacing:-1.628px;word-spacing:1.12px;left:319.69px;width:92.69999999999999px;text-align:center;">창고</div>
<div class="t" style="top:295.28px;font-size:8.6px;color:#333;letter-spacing:-1.403px;word-spacing:1.12px;left:412.5px;width:107.40000000000003px;text-align:center;">창고명 표시</div>
<div class="t" style="top:295.28px;font-size:8.6px;color:#505050;letter-spacing:0px;left:520.6px;width:71.60000000000002px;text-align:center;">N</div>
<div class="t" style="top:295.28px;font-size:8.6px;color:#333;letter-spacing:-0.926px;word-spacing:1.12px;left:591.74px;width:220.5px;text-align:center;">서울특별시 <span style="font-size:8.3px;letter-spacing:-.4px">OO</span>구 <span style="font-size:8.3px;letter-spacing:-.4px">OO</span>동&nbsp; <span style="font-size:8.3px;letter-spacing:-.4px">OOO</span>번지</div>
<div class="t" style="top:295.28px;font-size:8.3px;color:#444;letter-spacing:0.614px;left:813.01px;width:108.89999999999998px;text-align:center;">02-0000-0000</div>
<div class="t" style="top:295.28px;font-size:8.3px;color:#444;letter-spacing:0.233px;left:921.72px;width:88.89999999999998px;text-align:center;">2023.04.20</div>
<div class="b " style="left:176.3px;top:315.1px;width:9.5px;height:9.5px;background:#fff;border:1px solid #cfd2d6;border-radius:2.7px"></div>
<div class="t" style="top:313px;font-size:8.6px;color:#333;letter-spacing:-1.403px;word-spacing:1.12px;left:201.6px;width:118.19999999999999px;text-align:center;">회사명 표시</div>
<div class="t" style="top:313px;font-size:8.6px;color:#333;letter-spacing:-1.628px;word-spacing:1.12px;left:319.69px;width:92.69999999999999px;text-align:center;">창고</div>
<div class="t" style="top:313px;font-size:8.6px;color:#333;letter-spacing:-1.403px;word-spacing:1.12px;left:412.5px;width:107.40000000000003px;text-align:center;">창고명 표시</div>
<div class="t" style="top:313px;font-size:8.6px;color:#505050;letter-spacing:0px;left:520.6px;width:71.60000000000002px;text-align:center;">N</div>
<div class="t" style="top:313px;font-size:8.6px;color:#333;letter-spacing:-0.926px;word-spacing:1.12px;left:591.74px;width:220.5px;text-align:center;">서울특별시 <span style="font-size:8.3px;letter-spacing:-.4px">OO</span>구 <span style="font-size:8.3px;letter-spacing:-.4px">OO</span>동&nbsp; <span style="font-size:8.3px;letter-spacing:-.4px">OOO</span>번지</div>
<div class="t" style="top:313px;font-size:8.3px;color:#444;letter-spacing:0.614px;left:813.01px;width:108.89999999999998px;text-align:center;">02-0000-0000</div>
<div class="t" style="top:313px;font-size:8.3px;color:#444;letter-spacing:0.233px;left:921.72px;width:88.89999999999998px;text-align:center;">2023.04.20</div>
<div class="b " style="left:176.3px;top:332.83px;width:9.5px;height:9.5px;background:#fff;border:1px solid #cfd2d6;border-radius:2.7px"></div>
<div class="t" style="top:330.74px;font-size:8.6px;color:#333;letter-spacing:-1.403px;word-spacing:1.12px;left:201.6px;width:118.19999999999999px;text-align:center;">회사명 표시</div>
<div class="t" style="top:330.74px;font-size:8.6px;color:#333;letter-spacing:-1.628px;word-spacing:1.12px;left:319.69px;width:92.69999999999999px;text-align:center;">창고</div>
<div class="t" style="top:330.74px;font-size:8.6px;color:#333;letter-spacing:-1.403px;word-spacing:1.12px;left:412.5px;width:107.40000000000003px;text-align:center;">창고명 표시</div>
<div class="t" style="top:330.74px;font-size:8.6px;color:#505050;letter-spacing:0px;left:520.6px;width:71.60000000000002px;text-align:center;">N</div>
<div class="t" style="top:330.74px;font-size:8.6px;color:#333;letter-spacing:-0.926px;word-spacing:1.12px;left:591.74px;width:220.5px;text-align:center;">서울특별시 <span style="font-size:8.3px;letter-spacing:-.4px">OO</span>구 <span style="font-size:8.3px;letter-spacing:-.4px">OO</span>동&nbsp; <span style="font-size:8.3px;letter-spacing:-.4px">OOO</span>번지</div>
<div class="t" style="top:330.74px;font-size:8.3px;color:#444;letter-spacing:0.614px;left:813.01px;width:108.89999999999998px;text-align:center;">02-0000-0000</div>
<div class="t" style="top:330.74px;font-size:8.3px;color:#444;letter-spacing:0.233px;left:921.72px;width:88.89999999999998px;text-align:center;">2023.04.20</div>
<div class="b " style="left:176.3px;top:350.56px;width:9.5px;height:9.5px;background:#fff;border:1px solid #cfd2d6;border-radius:2.7px"></div>
<div class="t" style="top:348.47px;font-size:8.6px;color:#333;letter-spacing:-1.403px;word-spacing:1.12px;left:201.6px;width:118.19999999999999px;text-align:center;">회사명 표시</div>
<div class="t" style="top:348.47px;font-size:8.6px;color:#333;letter-spacing:-1.628px;word-spacing:1.12px;left:319.69px;width:92.69999999999999px;text-align:center;">창고</div>
<div class="t" style="top:348.47px;font-size:8.6px;color:#333;letter-spacing:-1.403px;word-spacing:1.12px;left:412.5px;width:107.40000000000003px;text-align:center;">창고명 표시</div>
<div class="t" style="top:348.47px;font-size:8.6px;color:#505050;letter-spacing:0px;left:520.6px;width:71.60000000000002px;text-align:center;">N</div>
<div class="t" style="top:348.47px;font-size:8.6px;color:#333;letter-spacing:-0.926px;word-spacing:1.12px;left:591.74px;width:220.5px;text-align:center;">서울특별시 <span style="font-size:8.3px;letter-spacing:-.4px">OO</span>구 <span style="font-size:8.3px;letter-spacing:-.4px">OO</span>동&nbsp; <span style="font-size:8.3px;letter-spacing:-.4px">OOO</span>번지</div>
<div class="t" style="top:348.47px;font-size:8.3px;color:#444;letter-spacing:0.614px;left:813.01px;width:108.89999999999998px;text-align:center;">02-0000-0000</div>
<div class="t" style="top:348.47px;font-size:8.3px;color:#444;letter-spacing:0.233px;left:921.72px;width:88.89999999999998px;text-align:center;">2023.04.20</div>
<div class="b " style="left:176.3px;top:368.3px;width:9.5px;height:9.5px;background:#fff;border:1px solid #cfd2d6;border-radius:2.7px"></div>
<div class="t" style="top:366.2px;font-size:8.6px;color:#333;letter-spacing:-1.403px;word-spacing:1.12px;left:201.6px;width:118.19999999999999px;text-align:center;">회사명 표시</div>
<div class="t" style="top:366.2px;font-size:8.6px;color:#333;letter-spacing:-1.628px;word-spacing:1.12px;left:319.69px;width:92.69999999999999px;text-align:center;">창고</div>
<div class="t" style="top:366.2px;font-size:8.6px;color:#333;letter-spacing:-1.403px;word-spacing:1.12px;left:412.5px;width:107.40000000000003px;text-align:center;">창고명 표시</div>
<div class="t" style="top:366.2px;font-size:8.6px;color:#505050;letter-spacing:0px;left:520.6px;width:71.60000000000002px;text-align:center;">N</div>
<div class="t" style="top:366.2px;font-size:8.6px;color:#333;letter-spacing:-0.926px;word-spacing:1.12px;left:591.74px;width:220.5px;text-align:center;">서울특별시 <span style="font-size:8.3px;letter-spacing:-.4px">OO</span>구 <span style="font-size:8.3px;letter-spacing:-.4px">OO</span>동&nbsp; <span style="font-size:8.3px;letter-spacing:-.4px">OOO</span>번지</div>
<div class="t" style="top:366.2px;font-size:8.3px;color:#444;letter-spacing:0.614px;left:813.01px;width:108.89999999999998px;text-align:center;">02-0000-0000</div>
<div class="t" style="top:366.2px;font-size:8.3px;color:#444;letter-spacing:0.233px;left:921.72px;width:88.89999999999998px;text-align:center;">2023.04.20</div>
<div class="b " style="left:176.3px;top:386.02px;width:9.5px;height:9.5px;background:#fff;border:1px solid #cfd2d6;border-radius:2.7px"></div>
<div class="t" style="top:383.93px;font-size:8.6px;color:#333;letter-spacing:-1.403px;word-spacing:1.12px;left:201.6px;width:118.19999999999999px;text-align:center;">회사명 표시</div>
<div class="t" style="top:383.93px;font-size:8.6px;color:#333;letter-spacing:-1.628px;word-spacing:1.12px;left:319.69px;width:92.69999999999999px;text-align:center;">창고</div>
<div class="t" style="top:383.93px;font-size:8.6px;color:#333;letter-spacing:-1.403px;word-spacing:1.12px;left:412.5px;width:107.40000000000003px;text-align:center;">창고명 표시</div>
<div class="t" style="top:383.93px;font-size:8.6px;color:#505050;letter-spacing:0px;left:520.6px;width:71.60000000000002px;text-align:center;">N</div>
<div class="t" style="top:383.93px;font-size:8.6px;color:#333;letter-spacing:-0.926px;word-spacing:1.12px;left:591.74px;width:220.5px;text-align:center;">서울특별시 <span style="font-size:8.3px;letter-spacing:-.4px">OO</span>구 <span style="font-size:8.3px;letter-spacing:-.4px">OO</span>동&nbsp; <span style="font-size:8.3px;letter-spacing:-.4px">OOO</span>번지</div>
<div class="t" style="top:383.93px;font-size:8.3px;color:#444;letter-spacing:0.614px;left:813.01px;width:108.89999999999998px;text-align:center;">02-0000-0000</div>
<div class="t" style="top:383.93px;font-size:8.3px;color:#444;letter-spacing:0.233px;left:921.72px;width:88.89999999999998px;text-align:center;">2023.04.20</div>
<div class="b " style="left:176.3px;top:403.75px;width:9.5px;height:9.5px;background:#fff;border:1px solid #cfd2d6;border-radius:2.7px"></div>
<div class="t" style="top:401.66px;font-size:8.6px;color:#333;letter-spacing:-1.403px;word-spacing:1.12px;left:201.6px;width:118.19999999999999px;text-align:center;">회사명 표시</div>
<div class="t" style="top:401.66px;font-size:8.6px;color:#333;letter-spacing:-1.628px;word-spacing:1.12px;left:319.69px;width:92.69999999999999px;text-align:center;">창고</div>
<div class="t" style="top:401.66px;font-size:8.6px;color:#333;letter-spacing:-1.403px;word-spacing:1.12px;left:412.5px;width:107.40000000000003px;text-align:center;">창고명 표시</div>
<div class="t" style="top:401.66px;font-size:8.6px;color:#505050;letter-spacing:0px;left:520.6px;width:71.60000000000002px;text-align:center;">N</div>
<div class="t" style="top:401.66px;font-size:8.6px;color:#333;letter-spacing:-0.926px;word-spacing:1.12px;left:591.74px;width:220.5px;text-align:center;">서울특별시 <span style="font-size:8.3px;letter-spacing:-.4px">OO</span>구 <span style="font-size:8.3px;letter-spacing:-.4px">OO</span>동&nbsp; <span style="font-size:8.3px;letter-spacing:-.4px">OOO</span>번지</div>
<div class="t" style="top:401.66px;font-size:8.3px;color:#444;letter-spacing:0.614px;left:813.01px;width:108.89999999999998px;text-align:center;">02-0000-0000</div>
<div class="t" style="top:401.66px;font-size:8.3px;color:#444;letter-spacing:0.233px;left:921.72px;width:88.89999999999998px;text-align:center;">2023.04.20</div>
<div class="b " style="left:176.3px;top:421.48px;width:9.5px;height:9.5px;background:#fff;border:1px solid #cfd2d6;border-radius:2.7px"></div>
<div class="t" style="top:419.38px;font-size:8.6px;color:#333;letter-spacing:-1.403px;word-spacing:1.12px;left:201.6px;width:118.19999999999999px;text-align:center;">회사명 표시</div>
<div class="t" style="top:419.38px;font-size:8.6px;color:#333;letter-spacing:-1.628px;word-spacing:1.12px;left:319.69px;width:92.69999999999999px;text-align:center;">창고</div>
<div class="t" style="top:419.38px;font-size:8.6px;color:#333;letter-spacing:-1.403px;word-spacing:1.12px;left:412.5px;width:107.40000000000003px;text-align:center;">창고명 표시</div>
<div class="t" style="top:419.38px;font-size:8.6px;color:#505050;letter-spacing:0px;left:520.6px;width:71.60000000000002px;text-align:center;">N</div>
<div class="t" style="top:419.38px;font-size:8.6px;color:#333;letter-spacing:-0.926px;word-spacing:1.12px;left:591.74px;width:220.5px;text-align:center;">서울특별시 <span style="font-size:8.3px;letter-spacing:-.4px">OO</span>구 <span style="font-size:8.3px;letter-spacing:-.4px">OO</span>동&nbsp; <span style="font-size:8.3px;letter-spacing:-.4px">OOO</span>번지</div>
<div class="t" style="top:419.38px;font-size:8.3px;color:#444;letter-spacing:0.614px;left:813.01px;width:108.89999999999998px;text-align:center;">02-0000-0000</div>
<div class="t" style="top:419.38px;font-size:8.3px;color:#444;letter-spacing:0.233px;left:921.72px;width:88.89999999999998px;text-align:center;">2023.04.20</div>
<div class="b " style="left:176.3px;top:439.21px;width:9.5px;height:9.5px;background:#fff;border:1px solid #cfd2d6;border-radius:2.7px"></div>
<div class="t" style="top:437.12px;font-size:8.6px;color:#333;letter-spacing:-1.403px;word-spacing:1.12px;left:201.6px;width:118.19999999999999px;text-align:center;">회사명 표시</div>
<div class="t" style="top:437.12px;font-size:8.6px;color:#333;letter-spacing:-1.628px;word-spacing:1.12px;left:319.69px;width:92.69999999999999px;text-align:center;">창고</div>
<div class="t" style="top:437.12px;font-size:8.6px;color:#333;letter-spacing:-1.403px;word-spacing:1.12px;left:412.5px;width:107.40000000000003px;text-align:center;">창고명 표시</div>
<div class="t" style="top:437.12px;font-size:8.6px;color:#505050;letter-spacing:0px;left:520.6px;width:71.60000000000002px;text-align:center;">N</div>
<div class="t" style="top:437.12px;font-size:8.6px;color:#333;letter-spacing:-0.926px;word-spacing:1.12px;left:591.74px;width:220.5px;text-align:center;">서울특별시 <span style="font-size:8.3px;letter-spacing:-.4px">OO</span>구 <span style="font-size:8.3px;letter-spacing:-.4px">OO</span>동&nbsp; <span style="font-size:8.3px;letter-spacing:-.4px">OOO</span>번지</div>
<div class="t" style="top:437.12px;font-size:8.3px;color:#444;letter-spacing:0.614px;left:813.01px;width:108.89999999999998px;text-align:center;">02-0000-0000</div>
<div class="t" style="top:437.12px;font-size:8.3px;color:#444;letter-spacing:0.233px;left:921.72px;width:88.89999999999998px;text-align:center;">2023.04.20</div>
<div class="b " style="left:176.3px;top:456.94px;width:9.5px;height:9.5px;background:#fff;border:1px solid #cfd2d6;border-radius:2.7px"></div>
<div class="t" style="top:454.85px;font-size:8.6px;color:#333;letter-spacing:-1.403px;word-spacing:1.12px;left:201.6px;width:118.19999999999999px;text-align:center;">회사명 표시</div>
<div class="t" style="top:454.85px;font-size:8.6px;color:#333;letter-spacing:-1.628px;word-spacing:1.12px;left:319.69px;width:92.69999999999999px;text-align:center;">창고</div>
<div class="t" style="top:454.85px;font-size:8.6px;color:#333;letter-spacing:-1.403px;word-spacing:1.12px;left:412.5px;width:107.40000000000003px;text-align:center;">창고명 표시</div>
<div class="t" style="top:454.85px;font-size:8.6px;color:#505050;letter-spacing:0px;left:520.6px;width:71.60000000000002px;text-align:center;">N</div>
<div class="t" style="top:454.85px;font-size:8.6px;color:#333;letter-spacing:-0.926px;word-spacing:1.12px;left:591.74px;width:220.5px;text-align:center;">서울특별시 <span style="font-size:8.3px;letter-spacing:-.4px">OO</span>구 <span style="font-size:8.3px;letter-spacing:-.4px">OO</span>동&nbsp; <span style="font-size:8.3px;letter-spacing:-.4px">OOO</span>번지</div>
<div class="t" style="top:454.85px;font-size:8.3px;color:#444;letter-spacing:0.614px;left:813.01px;width:108.89999999999998px;text-align:center;">02-0000-0000</div>
<div class="t" style="top:454.85px;font-size:8.3px;color:#444;letter-spacing:0.233px;left:921.72px;width:88.89999999999998px;text-align:center;">2023.04.20</div>
<div class="b " style="left:176.3px;top:474.68px;width:9.5px;height:9.5px;background:#fff;border:1px solid #cfd2d6;border-radius:2.7px"></div>
<div class="t" style="top:472.58px;font-size:8.6px;color:#333;letter-spacing:-1.403px;word-spacing:1.12px;left:201.6px;width:118.19999999999999px;text-align:center;">회사명 표시</div>
<div class="t" style="top:472.58px;font-size:8.6px;color:#333;letter-spacing:-1.628px;word-spacing:1.12px;left:319.69px;width:92.69999999999999px;text-align:center;">창고</div>
<div class="t" style="top:472.58px;font-size:8.6px;color:#333;letter-spacing:-1.403px;word-spacing:1.12px;left:412.5px;width:107.40000000000003px;text-align:center;">창고명 표시</div>
<div class="t" style="top:472.58px;font-size:8.6px;color:#505050;letter-spacing:0px;left:520.6px;width:71.60000000000002px;text-align:center;">N</div>
<div class="t" style="top:472.58px;font-size:8.6px;color:#333;letter-spacing:-0.926px;word-spacing:1.12px;left:591.74px;width:220.5px;text-align:center;">서울특별시 <span style="font-size:8.3px;letter-spacing:-.4px">OO</span>구 <span style="font-size:8.3px;letter-spacing:-.4px">OO</span>동&nbsp; <span style="font-size:8.3px;letter-spacing:-.4px">OOO</span>번지</div>
<div class="t" style="top:472.58px;font-size:8.3px;color:#444;letter-spacing:0.614px;left:813.01px;width:108.89999999999998px;text-align:center;">02-0000-0000</div>
<div class="t" style="top:472.58px;font-size:8.3px;color:#444;letter-spacing:0.233px;left:921.72px;width:88.89999999999998px;text-align:center;">2023.04.20</div>
<div class="b " style="left:176.3px;top:492.4px;width:9.5px;height:9.5px;background:#fff;border:1px solid #cfd2d6;border-radius:2.7px"></div>
<div class="t" style="top:490.31px;font-size:8.6px;color:#333;letter-spacing:-1.403px;word-spacing:1.12px;left:201.6px;width:118.19999999999999px;text-align:center;">회사명 표시</div>
<div class="t" style="top:490.31px;font-size:8.6px;color:#333;letter-spacing:-1.628px;word-spacing:1.12px;left:319.69px;width:92.69999999999999px;text-align:center;">창고</div>
<div class="t" style="top:490.31px;font-size:8.6px;color:#333;letter-spacing:-1.403px;word-spacing:1.12px;left:412.5px;width:107.40000000000003px;text-align:center;">창고명 표시</div>
<div class="t" style="top:490.31px;font-size:8.6px;color:#505050;letter-spacing:0px;left:520.6px;width:71.60000000000002px;text-align:center;">N</div>
<div class="t" style="top:490.31px;font-size:8.6px;color:#333;letter-spacing:-0.926px;word-spacing:1.12px;left:591.74px;width:220.5px;text-align:center;">서울특별시 <span style="font-size:8.3px;letter-spacing:-.4px">OO</span>구 <span style="font-size:8.3px;letter-spacing:-.4px">OO</span>동&nbsp; <span style="font-size:8.3px;letter-spacing:-.4px">OOO</span>번지</div>
<div class="t" style="top:490.31px;font-size:8.3px;color:#444;letter-spacing:0.614px;left:813.01px;width:108.89999999999998px;text-align:center;">02-0000-0000</div>
<div class="t" style="top:490.31px;font-size:8.3px;color:#444;letter-spacing:0.233px;left:921.72px;width:88.89999999999998px;text-align:center;">2023.04.20</div>
<div class="b " style="left:176.3px;top:510.13px;width:9.5px;height:9.5px;background:#fff;border:1px solid #cfd2d6;border-radius:2.7px"></div>
<div class="t" style="top:508.03px;font-size:8.6px;color:#333;letter-spacing:-1.403px;word-spacing:1.12px;left:201.6px;width:118.19999999999999px;text-align:center;">회사명 표시</div>
<div class="t" style="top:508.03px;font-size:8.6px;color:#333;letter-spacing:-1.628px;word-spacing:1.12px;left:319.69px;width:92.69999999999999px;text-align:center;">창고</div>
<div class="t" style="top:508.03px;font-size:8.6px;color:#333;letter-spacing:-1.403px;word-spacing:1.12px;left:412.5px;width:107.40000000000003px;text-align:center;">창고명 표시</div>
<div class="t" style="top:508.03px;font-size:8.6px;color:#505050;letter-spacing:0px;left:520.6px;width:71.60000000000002px;text-align:center;">N</div>
<div class="t" style="top:508.03px;font-size:8.6px;color:#333;letter-spacing:-0.926px;word-spacing:1.12px;left:591.74px;width:220.5px;text-align:center;">서울특별시 <span style="font-size:8.3px;letter-spacing:-.4px">OO</span>구 <span style="font-size:8.3px;letter-spacing:-.4px">OO</span>동&nbsp; <span style="font-size:8.3px;letter-spacing:-.4px">OOO</span>번지</div>
<div class="t" style="top:508.03px;font-size:8.3px;color:#444;letter-spacing:0.614px;left:813.01px;width:108.89999999999998px;text-align:center;">02-0000-0000</div>
<div class="t" style="top:508.03px;font-size:8.3px;color:#444;letter-spacing:0.233px;left:921.72px;width:88.89999999999998px;text-align:center;">2023.04.20</div>
<div class="b " style="left:157px;top:537px;width:867px;height:18.5px;background:#fff;border-bottom:1px solid #e2e4e7"></div>
<div class="t" style="top:540.1px;font-size:7.6px;color:#3f63d6;letter-spacing:-1.253px;font-weight:bold;word-spacing:0.99px;left:161.92px;">납입카드 출력</div>
<div class="b " style="left:157px;top:554px;width:61.6px;height:1.6px;background:#4d6fdc"></div>
<div class="b " style="left:218.1px;top:537px;width:1px;height:18px;background:#e7e8eb"></div>
<svg class="b" style="left:207.7px;top:543.4px;width:5.4px;height:5.4px;" viewBox="0 0 5.400 5.400"><path d="M.3.300l4.800 4.800M5.100.3L.3 5.100" stroke="#444" stroke-width=".8"/></svg>
<div class="t" style="top:540.1px;font-size:7.6px;color:#555;letter-spacing:-1.327px;word-spacing:0.99px;left:223.72px;">재고상태변경처리</div>
<div class="b " style="left:289px;top:537px;width:1px;height:18px;background:#e7e8eb"></div>
<svg class="b" style="left:278.6px;top:543.4px;width:5.4px;height:5.4px;" viewBox="0 0 5.400 5.400"><path d="M.3.300l4.800 4.800M5.100.3L.3 5.100" stroke="#444" stroke-width=".8"/></svg>
<div class="t" style="top:540.1px;font-size:7.6px;color:#555;letter-spacing:-1.363px;word-spacing:0.99px;left:294.62px;">납품오더취소 등록</div>
<div class="b " style="left:362.8px;top:537px;width:1px;height:18px;background:#e7e8eb"></div>
<svg class="b" style="left:352.4px;top:543.4px;width:5.4px;height:5.4px;" viewBox="0 0 5.400 5.400"><path d="M.3.300l4.800 4.800M5.100.3L.3 5.100" stroke="#444" stroke-width=".8"/></svg>
<div class="t" style="top:540.1px;font-size:7.6px;color:#555;letter-spacing:-1.375px;word-spacing:0.99px;left:368.42px;">재고조정현황 조회</div>
<div class="b " style="left:436px;top:537px;width:1px;height:18px;background:#e7e8eb"></div>
<svg class="b" style="left:425.6px;top:543.4px;width:5.4px;height:5.4px;" viewBox="0 0 5.400 5.400"><path d="M.3.300l4.800 4.800M5.100.3L.3 5.100" stroke="#444" stroke-width=".8"/></svg>
<div class="t" style="top:540.1px;font-size:7.6px;color:#555;letter-spacing:-1.253px;word-spacing:0.99px;left:441.62px;">반출취소 선택</div>
<div class="b " style="left:497.2px;top:537px;width:1px;height:18px;background:#e7e8eb"></div>
<svg class="b" style="left:486.8px;top:543.4px;width:5.4px;height:5.4px;" viewBox="0 0 5.400 5.400"><path d="M.3.300l4.800 4.800M5.100.3L.3 5.100" stroke="#444" stroke-width=".8"/></svg>
<div class="t" style="top:540.1px;font-size:7.6px;color:#555;letter-spacing:-1.461px;word-spacing:0.99px;left:502.82px;">입수량</div>
<div class="b " style="left:537.3px;top:537px;width:1px;height:18px;background:#e7e8eb"></div>
<svg class="b" style="left:526.9px;top:543.4px;width:5.4px;height:5.4px;" viewBox="0 0 5.400 5.400"><path d="M.3.300l4.800 4.800M5.100.3L.3 5.100" stroke="#444" stroke-width=".8"/></svg>
<div class="t" style="top:540.1px;font-size:7.6px;color:#555;letter-spacing:-1.672px;word-spacing:0.99px;left:542.92px;">반품등록</div>
<div class="b " style="left:583px;top:537px;width:1px;height:18px;background:#e7e8eb"></div>
<svg class="b" style="left:572.6px;top:543.4px;width:5.4px;height:5.4px;" viewBox="0 0 5.400 5.400"><path d="M.3.300l4.800 4.800M5.100.3L.3 5.100" stroke="#444" stroke-width=".8"/></svg>
<div class="t" style="top:540.1px;font-size:7.6px;color:#555;letter-spacing:-1.472px;word-spacing:0.99px;left:588.62px;">피킹처리</div>
<div class="b " style="left:629px;top:537px;width:1px;height:18px;background:#e7e8eb"></div>
<svg class="b" style="left:618.6px;top:543.4px;width:5.4px;height:5.4px;" viewBox="0 0 5.400 5.400"><path d="M.3.300l4.800 4.800M5.100.3L.3 5.100" stroke="#444" stroke-width=".8"/></svg>
<div class="t" style="top:540.1px;font-size:7.6px;color:#555;letter-spacing:-1.37px;word-spacing:0.99px;left:634.62px;">반출출고지시등록</div>
<div class="b " style="left:701.1px;top:537px;width:1px;height:18px;background:#e7e8eb"></div>
<svg class="b" style="left:690.7px;top:543.4px;width:5.4px;height:5.4px;" viewBox="0 0 5.400 5.400"><path d="M.3.300l4.800 4.800M5.100.3L.3 5.100" stroke="#444" stroke-width=".8"/></svg>
<div class="t" style="top:540.1px;font-size:7.6px;color:#555;letter-spacing:-1.399px;word-spacing:0.99px;left:706.72px;">재고실사지시등록</div>
<div class="b " style="left:771.8px;top:537px;width:1px;height:18px;background:#e7e8eb"></div>
<svg class="b" style="left:761.4px;top:543.4px;width:5.4px;height:5.4px;" viewBox="0 0 5.400 5.400"><path d="M.3.300l4.800 4.800M5.100.3L.3 5.100" stroke="#444" stroke-width=".8"/></svg>
<div class="t" style="top:540.1px;font-size:7.6px;color:#555;letter-spacing:-1.341px;word-spacing:0.99px;left:777.42px;">운송오더상세</div>
<div class="b " style="left:831.9px;top:537px;width:1px;height:18px;background:#e7e8eb"></div>
<svg class="b" style="left:821.5px;top:543.4px;width:5.4px;height:5.4px;" viewBox="0 0 5.400 5.400"><path d="M.3.300l4.800 4.800M5.100.3L.3 5.100" stroke="#444" stroke-width=".8"/></svg>
<div class="t" style="top:540.1px;font-size:7.6px;color:#555;letter-spacing:-0.429px;word-spacing:0.99px;left:837.52px;">PDA상차(I/F)</div>
<div class="b " style="left:892.9px;top:537px;width:1px;height:18px;background:#e7e8eb"></div>
<svg class="b" style="left:882.5px;top:543.4px;width:5.4px;height:5.4px;" viewBox="0 0 5.400 5.400"><path d="M.3.300l4.800 4.800M5.100.3L.3 5.100" stroke="#444" stroke-width=".8"/></svg>
<div class="t" style="top:540.1px;font-size:7.6px;color:#555;letter-spacing:-1.4px;word-spacing:0.99px;left:898.52px;">재고조정취소 등록</div>
<div class="b " style="left:966.7px;top:537px;width:1px;height:18px;background:#e7e8eb"></div>
<svg class="b" style="left:956.3px;top:543.4px;width:5.4px;height:5.4px;" viewBox="0 0 5.400 5.400"><path d="M.3.300l4.800 4.800M5.100.3L.3 5.100" stroke="#444" stroke-width=".8"/></svg>
<div class="t" style="top:540.1px;font-size:7.6px;color:#555;letter-spacing:-0.912px;left:972.7px;">세트작</div>
<div class="b " style="left:988.6px;top:537px;width:36px;height:18px;background:#fff"></div>
<div class="b " style="left:1006px;top:537px;width:1px;height:18px;background:#e7e8eb"></div>
<svg class="b" style="left:995.6px;top:542.9px;width:3.8px;height:6.4px;" viewBox="0 0 3.800 6.400"><path d="M3.300.5L.7 3.200l2.600 2.700" fill="none" stroke="#cdd0d4" stroke-width=".9"/></svg>
<svg class="b" style="left:1013.5px;top:542.9px;width:3.8px;height:6.4px;" viewBox="0 0 3.800 6.400"><path d="M.5.5l2.600 2.700L.5 5.900" fill="none" stroke="#444" stroke-width=".9"/></svg>
</div>
</body></html>
